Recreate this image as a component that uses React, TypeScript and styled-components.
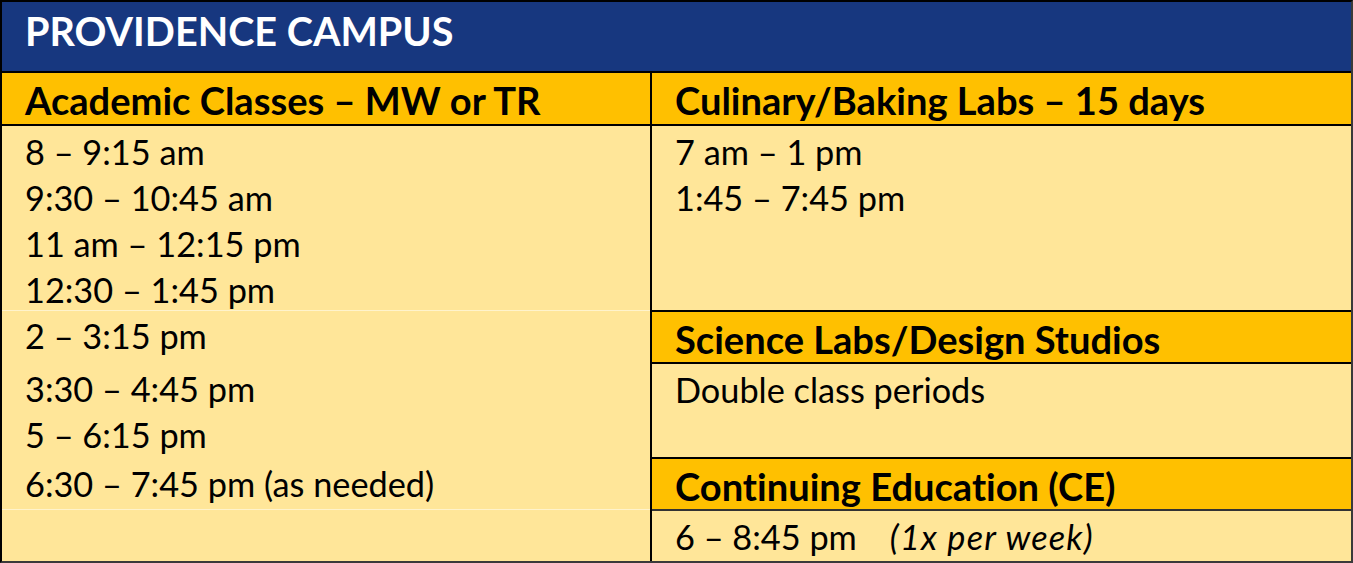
import React from 'react';
import styled, { createGlobalStyle } from 'styled-components';

const GlobalStyle = createGlobalStyle`
  html, body {
    margin: 0;
    padding: 0;
    background: #ffffff;
  }
  body {
    font-family: Lato, "Open Sans", Arial, sans-serif;
    font-variant-ligatures: no-common-ligatures;
    color: #000000;
  }
`;

// whole schedule table
const Table = styled.div`
  box-sizing: border-box;
  width: 1353px;
  height: 563px;
  display: flex;
  flex-direction: column;
  border-top: 2px solid #000;
  border-left: 2px solid #000;
  border-right: 2px solid #3a3a3a;
  border-bottom: 2px solid #3a3a3a;
  background: #ffe699;
`;

const TitleBar = styled.div`
  height: 71px;
  display: flex;
  align-items: flex-start;
  padding: 5px 0 0 23px;
  box-sizing: border-box;
  background: #17377f;
  border-bottom: 2px solid #000;
`;

const Title = styled.h1`
  margin: 0;
  color: #ffffff;
  font-size: 39.6px;
  font-weight: 700;
  line-height: 48px;
`;

const Columns = styled.div`
  flex: 1;
  display: grid;
  grid-template-columns: 648px 1fr;
  min-height: 0;
`;

const Column = styled.div<{ $divider?: boolean }>`
  display: flex;
  flex-direction: column;
  border-left: ${({ $divider }) => ($divider ? '2px solid #000' : 'none')};
`;

const Heading = styled.h2<{ $height: number; $line?: string }>`
  margin: 0;
  box-sizing: border-box;
  height: ${({ $height }) => $height}px;
  display: flex;
  align-items: center;
  padding: 3px 0 0 23px;
  background: #ffc000;
  border-bottom: 2px solid ${({ $line }) => $line || '#000'};
  font-size: 38.1px;
  font-weight: 700;
  white-space: nowrap;
`;

const Cell = styled.div<{ $height?: number; $line?: string }>`
  box-sizing: border-box;
  ${({ $height }) => ($height ? `height: ${$height}px;` : 'flex: 1;')}
  padding: 3px 0 0 23px;
  border-bottom: ${({ $line }) => $line || 'none'};
`;

const Line = styled.div<{ $space?: number }>`
  margin-top: ${({ $space }) => $space || 0}px;
  font-size: 34.3px;
  line-height: 46px;
  white-space: nowrap;
`;

const Note = styled.span`
  margin-left: 33px;
  font-style: italic;
  letter-spacing: 1.2px;
`;

const morningSlots = [
  { text: '8 – 9:15 am', space: 0 },
  { text: '9:30 – 10:45 am', space: 0 },
  { text: '11 am – 12:15 pm', space: 0 },
  { text: '12:30 – 1:45 pm', space: 0 }
];

const afternoonSlots = [
  { text: '2 – 3:15 pm', space: -1 },
  { text: '3:30 – 4:45 pm', space: 7 },
  { text: '5 – 6:15 pm', space: 0 },
  { text: '6:30 – 7:45 pm (as needed)', space: 3 }
];

const labSlots = ['7 am – 1 pm', '1:45 – 7:45 pm'];

const softLine = '1px solid #fff3cc';

function App() {
  return (
    <>
      <GlobalStyle />
      <Table>
        <TitleBar>
          <Title>PROVIDENCE CAMPUS</Title>
        </TitleBar>
        <Columns>
          <Column>
            <Heading $height={53}>Academic Classes – MW or TR</Heading>
            <Cell $height={185} $line={softLine}>
              {morningSlots.map((item) => (
                <Line key={item.text} $space={item.space}>
                  {item.text}
                </Line>
              ))}
            </Cell>
            <Cell $height={199} $line={softLine}>
              {afternoonSlots.map((item) => (
                <Line key={item.text} $space={item.space}>
                  {item.text}
                </Line>
              ))}
            </Cell>
            <Cell />
          </Column>
          <Column $divider>
            <Heading $height={53}>Culinary/Baking Labs – 15 days</Heading>
            <Cell $height={186} $line="2px solid #000">
              {labSlots.map((text) => (
                <Line key={text}>{text}</Line>
              ))}
            </Cell>
            <Heading $height={52}>Science Labs/Design Studios</Heading>
            <Cell $height={95} $line="2px solid #000">
              <Line>Double class periods</Line>
            </Cell>
            <Heading $height={52} $line="#333">
              Continuing Education (CE)
            </Heading>
            <Cell>
              <Line>
                6 – 8:45 pm<Note>(1x per week)</Note>
              </Line>
            </Cell>
          </Column>
        </Columns>
      </Table>
    </>
  );
}

export default App;
